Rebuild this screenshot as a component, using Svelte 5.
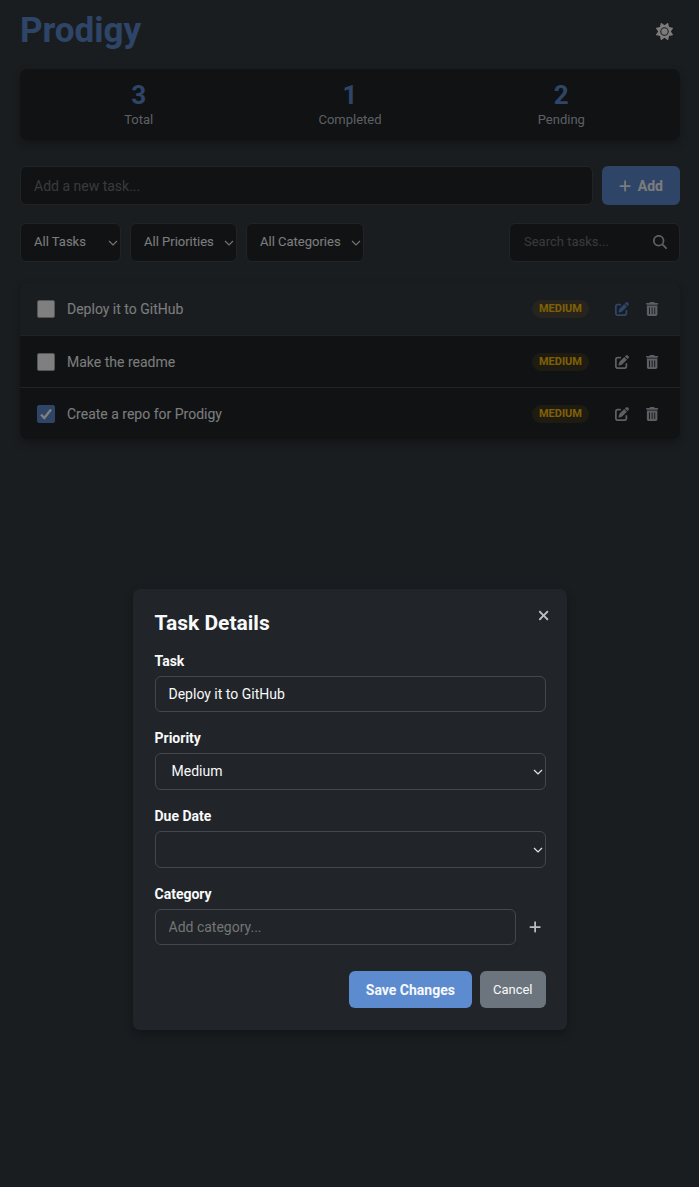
<script>
  const icons = {
    sun: { w: 512, d: 'M361.5 1.2c5 2.1 8.6 6.6 9.6 11.9L391 121l107.9 19.8c5.3 1 9.8 4.6 11.9 9.6s1.5 10.7-1.6 15.2L446.9 256l62.3 90.3c3.1 4.5 3.7 10.2 1.6 15.2s-6.6 8.6-11.9 9.6L391 391 371.1 498.9c-1 5.3-4.6 9.8-9.6 11.9s-10.7 1.5-15.2-1.6L256 446.9l-90.3 62.3c-4.5 3.1-10.2 3.7-15.2 1.6s-8.6-6.6-9.6-11.9L121 391 13.1 371.1c-5.3-1-9.8-4.6-11.9-9.6s-1.5-10.7 1.6-15.2L65.1 256 2.8 165.7c-3.1-4.5-3.7-10.2-1.6-15.2s6.6-8.6 11.9-9.6L121 121 140.9 13.1c1-5.3 4.6-9.8 9.6-11.9s10.7-1.5 15.2 1.6L256 65.1 346.3 2.8c4.5-3.1 10.2-3.7 15.2-1.6zM160 256a96 96 0 1 1 192 0 96 96 0 1 1 -192 0zm224 0a128 128 0 1 0 -256 0 128 128 0 1 0 256 0z' },
    plus: { w: 448, d: 'M256 80c0-17.7-14.3-32-32-32s-32 14.3-32 32V224H48c-17.7 0-32 14.3-32 32s14.3 32 32 32H192V432c0 17.7 14.3 32 32 32s32-14.3 32-32V288H400c17.7 0 32-14.3 32-32s-14.3-32-32-32H256V80z' },
    search: { w: 512, d: 'M416 208c0 45.9-14.9 88.3-40 122.7L502.6 457.4c12.5 12.5 12.5 32.8 0 45.3s-32.8 12.5-45.3 0L330.7 376c-34.4 25.2-76.8 40-122.7 40C93.1 416 0 322.9 0 208S93.1 0 208 0S416 93.1 416 208zM208 352a144 144 0 1 0 0-288 144 144 0 1 0 0 288z' },
    edit: { w: 512, d: 'M471.6 21.7c-21.9-21.9-57.3-21.9-79.2 0L362.3 51.7l97.9 97.9 30.1-30.1c21.9-21.9 21.9-57.3 0-79.2L471.6 21.7zm-299.2 220c-6.1 6.1-10.8 13.6-13.5 21.9l-29.6 88.8c-2.9 8.6-.6 18.1 5.8 24.6s15.9 8.7 24.6 5.8l88.8-29.6c8.2-2.7 15.7-7.4 21.9-13.5L437.7 172.3 339.7 74.3 172.4 241.7zM96 64C43 64 0 107 0 160V416c0 53 43 96 96 96H352c53 0 96-43 96-96V320c0-17.7-14.3-32-32-32s-32 14.3-32 32v96c0 17.7-14.3 32-32 32H96c-17.7 0-32-14.3-32-32V160c0-17.7 14.3-32 32-32h96c17.7 0 32-14.3 32-32s-14.3-32-32-32H96z' },
    trash: { w: 448, d: 'M135.2 17.7L128 32H32C14.3 32 0 46.3 0 64S14.3 96 32 96H416c17.7 0 32-14.3 32-32s-14.3-32-32-32H320l-7.2-14.3C307.4 6.8 296.3 0 284.2 0H163.8c-12.1 0-23.2 6.8-28.6 17.7zM416 128H32V448c0 35.3 28.7 64 64 64H352c35.3 0 64-28.7 64-64V128zM144 208V432c0 8.8-7.2 16-16 16s-16-7.2-16-16V208c0-8.8 7.2-16 16-16s16 7.2 16 16zm96 0V432c0 8.8-7.2 16-16 16s-16-7.2-16-16V208c0-8.8 7.2-16 16-16s16 7.2 16 16zm96 0V432c0 8.8-7.2 16-16 16s-16-7.2-16-16V208c0-8.8 7.2-16 16-16s16 7.2 16 16z' },
    close: { w: 384, d: 'M342.6 150.6c12.5-12.5 12.5-32.8 0-45.3s-32.8-12.5-45.3 0L192 210.7 86.6 105.4c-12.5-12.5-32.8-12.5-45.3 0s-12.5 32.8 0 45.3L146.7 256 41.4 361.4c-12.5 12.5-12.5 32.8 0 45.3s32.8 12.5 45.3 0L192 301.3 297.4 406.6c12.5 12.5 32.8 12.5 45.3 0s12.5-32.8 0-45.3L237.3 256 342.6 150.6z' }
  };

  let tasks = $state([
    { name: 'Deploy it to GitHub', done: false },
    { name: 'Make the readme', done: false },
    { name: 'Create a repo for Prodigy', done: true }
  ]);
  let completed = $derived(tasks.filter((t) => t.done).length);
  let stats = $derived([
    { label: 'Total', value: tasks.length },
    { label: 'Completed', value: completed },
    { label: 'Pending', value: tasks.length - completed }
  ]);
  let draft = $state('Deploy it to GitHub');
</script>

{#snippet icon(name)}
  <svg class="icon" viewBox="0 0 {icons[name].w} 512" fill="currentColor" aria-hidden="true">
    <path d={icons[name].d} />
  </svg>
{/snippet}

<div class="page">
  <header>
    <h1>Prodigy</h1>
    <button class="icon-btn theme" aria-label="Toggle theme">{@render icon('sun')}</button>
  </header>

  <section class="stats">
    {#each stats as s}
      <div class="stat">
        <span class="value">{s.value}</span>
        <span class="label">{s.label}</span>
      </div>
    {/each}
  </section>

  <form class="add" onsubmit={(e) => e.preventDefault()}>
    <input type="text" class="field" placeholder="Add a new task..." aria-label="New task" />
    <button class="primary">{@render icon('plus')} Add</button>
  </form>

  <div class="filters">
    <select class="field" aria-label="Status"><option>All Tasks</option><option>Completed</option></select>
    <select class="field" aria-label="Priority filter"><option>All Priorities</option></select>
    <select class="field" aria-label="Category filter"><option>All Categories</option></select>
    <div class="field search">
      <input type="text" placeholder="Search tasks..." aria-label="Search tasks" />
      {@render icon('search')}
    </div>
  </div>

  <ul class="tasks">
    {#each tasks as t, i}
      <li class:active={i === 0}>
        <label>
          <span class="tick">
            <input type="checkbox" bind:checked={t.done} />
            <svg viewBox="0 0 18 18" aria-hidden="true"><path d="M4 9.5l3.3 3.5L14 4.5" /></svg>
          </span>
          {t.name}
        </label>
        <span class="badge">MEDIUM</span>
        <button class="icon-btn edit" aria-label="Edit task">{@render icon('edit')}</button>
        <button class="icon-btn" aria-label="Delete task">{@render icon('trash')}</button>
      </li>
    {/each}
  </ul>
</div>

<div class="overlay">
  <div class="modal" role="dialog" aria-modal="true" aria-labelledby="modal-title">
    <div class="modal-head">
      <h2 id="modal-title">Task Details</h2>
      <button class="icon-btn close" aria-label="Close">{@render icon('close')}</button>
    </div>
    <div class="group">
      <label for="task">Task</label>
      <input id="task" type="text" class="field" bind:value={draft} />
    </div>
    <div class="group">
      <label for="priority">Priority</label>
      <select id="priority" class="field"><option>Medium</option></select>
    </div>
    <div class="group">
      <label for="due">Due Date</label>
      <select id="due" class="field"><option value=""></option></select>
    </div>
    <div class="group">
      <label for="category">Category</label>
      <div class="category">
        <input id="category" type="text" class="field" placeholder="Add category..." />
        <button class="icon-btn" aria-label="Add category">{@render icon('plus')}</button>
      </div>
    </div>
    <div class="actions">
      <button class="primary">Save Changes</button>
      <button class="secondary">Cancel</button>
    </div>
  </div>
</div>

<style>
  :global(body) {
    background: #343a40;
  }
  .page,
  .overlay {
    --surface: #212529;
    --line: #42484e;
    --text: #f8f9fa;
    --muted: #b8bfc6;
    --accent: #5c8bd0;
    box-sizing: border-box;
    min-height: 100vh;
    font-family: Roboto, sans-serif;
    font-size: 14px;
    color: var(--text);
  }
  .page {
    padding: 9px 19px 20px 20px;
    background: #343a40;
  }
  *,
  *::before {
    box-sizing: border-box;
  }
  h1,
  h2,
  ul {
    margin: 0;
    padding: 0;
  }
  button,
  input,
  select {
    font: inherit;
    color: inherit;
  }
  button {
    border: 0;
    cursor: pointer;
  }
  .icon {
    display: block;
    height: 1em;
    flex: none;
  }
  .icon-btn {
    display: flex;
    align-items: center;
    justify-content: center;
    padding: 0;
    width: 31px;
    height: 31px;
    background: none;
    color: var(--muted);
  }
  header {
    display: flex;
    align-items: center;
    justify-content: space-between;
    height: 44px;
    margin-bottom: 16px;
  }
  h1 {
    font-size: 35px;
    line-height: 44px;
    color: var(--accent);
  }
  .theme {
    color: var(--text);
    font-size: 17px;
  }
  .stats {
    display: grid;
    grid-template-columns: repeat(3, 1fr);
    padding: 12px 13px 11px;
    margin-bottom: 26px;
    background: var(--surface);
    border-radius: 7px;
    box-shadow: 0 4px 8px rgb(0 0 0 / 0.3);
  }
  .stat {
    display: flex;
    flex-direction: column;
    align-items: center;
  }
  .value {
    font-size: 26px;
    line-height: 29px;
    font-weight: 700;
    color: var(--accent);
  }
  .label {
    font-size: 13px;
    line-height: 19px;
    color: var(--muted);
  }
  .field {
    height: 39px;
    min-width: 0;
    padding: 0 13px;
    background: var(--surface);
    border: 1px solid var(--line);
    border-radius: 6px;
    outline: 0;
  }
  select.field {
    appearance: none;
    padding: 0 20px 1px 16px;
    background-image: url("data:image/svg+xml,%3Csvg xmlns='http://www.w3.org/2000/svg' width='10' height='6'%3E%3Cpath d='M1 1L5 5 9 1' fill='none' stroke='%23e2e4e6' stroke-width='1.2'/%3E%3C/svg%3E");
    background-repeat: no-repeat;
    background-position: right 2px center;
  }
  input::placeholder {
    color: #757575;
    opacity: 1;
  }
  .add {
    display: flex;
    gap: 9px;
    margin-bottom: 18px;
  }
  .add .field {
    flex: 1;
  }
  .primary {
    display: flex;
    align-items: center;
    justify-content: center;
    gap: 7px;
    padding: 0 17px;
    background: var(--accent);
    border-radius: 6px;
    font-weight: 700;
  }
  .primary .icon {
    height: 14px;
  }
  .filters {
    display: flex;
    gap: 9px;
    margin-bottom: 21px;
    font-size: 13px;
  }
  .filters .field {
    padding: 0 22px 2px 13px;
  }
  .filters .search {
    display: flex;
    align-items: center;
    width: 171px;
    margin-left: auto;
    padding: 0 12px 2px 14px;
  }
  .search input {
    flex: 1;
    min-width: 0;
    padding: 0;
    border: 0;
    outline: 0;
    background: none;
  }
  .search .icon {
    height: 14px;
    color: var(--muted);
  }
  .tasks {
    list-style: none;
    background: var(--surface);
    border-radius: 7px;
    overflow: hidden;
    box-shadow: 0 4px 8px rgb(0 0 0 / 0.3);
  }
  li {
    display: flex;
    align-items: center;
    height: 52px;
    padding: 0 12px 0 17px;
  }
  li + li {
    border-top: 1px solid var(--line);
  }
  li.active {
    background: #343a40;
  }
  li label {
    display: flex;
    flex: 1;
    align-items: center;
    gap: 12px;
  }
  .tick {
    display: grid;
    width: 18px;
    height: 18px;
  }
  .tick > * {
    grid-area: 1 / 1;
  }
  .tick input {
    appearance: none;
    width: 18px;
    height: 18px;
    margin: 0;
    background: #fff;
    border: 1px solid #adadad;
    border-radius: 2px;
  }
  .tick input:checked {
    background: var(--accent);
    border-color: var(--accent);
  }
  .tick svg {
    display: none;
    fill: none;
    stroke: #fff;
    stroke-width: 2.4;
  }
  .tick input:checked + svg {
    display: block;
  }
  .badge {
    padding: 0 7px;
    margin-right: 17px;
    border-radius: 9px;
    background: #ffc1071f;
    color: #ffc107;
    font-size: 11px;
    line-height: 18px;
    font-weight: 700;
  }
  .active .edit {
    color: var(--accent);
  }
  .overlay {
    position: absolute;
    inset: 0;
    display: flex;
    align-items: flex-start;
    justify-content: center;
    padding: 589px 20px 40px;
    background: rgb(0 0 0 / 0.5);
  }
  .modal {
    width: 100%;
    max-width: 434px;
    padding: 22px 21px 22px 22px;
    background: var(--surface);
    border-radius: 7px;
    box-shadow: 0 4px 8px rgb(0 0 0 / 0.3);
  }
  .modal-head {
    display: flex;
    align-items: flex-start;
    justify-content: space-between;
    margin-bottom: 17px;
  }
  h2 {
    font-size: 21px;
    line-height: 24px;
  }
  .close {
    margin: -11px -14px -8px 0;
    font-size: 15px;
  }
  .group {
    display: flex;
    flex-direction: column;
    gap: 6px;
    margin-bottom: 17px;
  }
  .group label {
    line-height: 18px;
    font-weight: 700;
  }
  .modal .field {
    height: 36px;
  }
  .modal select.field {
    height: 37px;
  }
  .category {
    display: flex;
    align-items: center;
    gap: 9px;
  }
  .category .field {
    flex: 1;
  }
  .category .icon-btn {
    width: 21px;
  }
  .category .icon {
    height: 14px;
  }
  .actions {
    display: flex;
    justify-content: flex-end;
    gap: 8px;
    padding-top: 9px;
  }
  .actions button {
    height: 37px;
  }
  .secondary {
    padding: 0 13px;
    background: #6c757d;
    border-radius: 6px;
    font-size: 13px;
  }
</style>
